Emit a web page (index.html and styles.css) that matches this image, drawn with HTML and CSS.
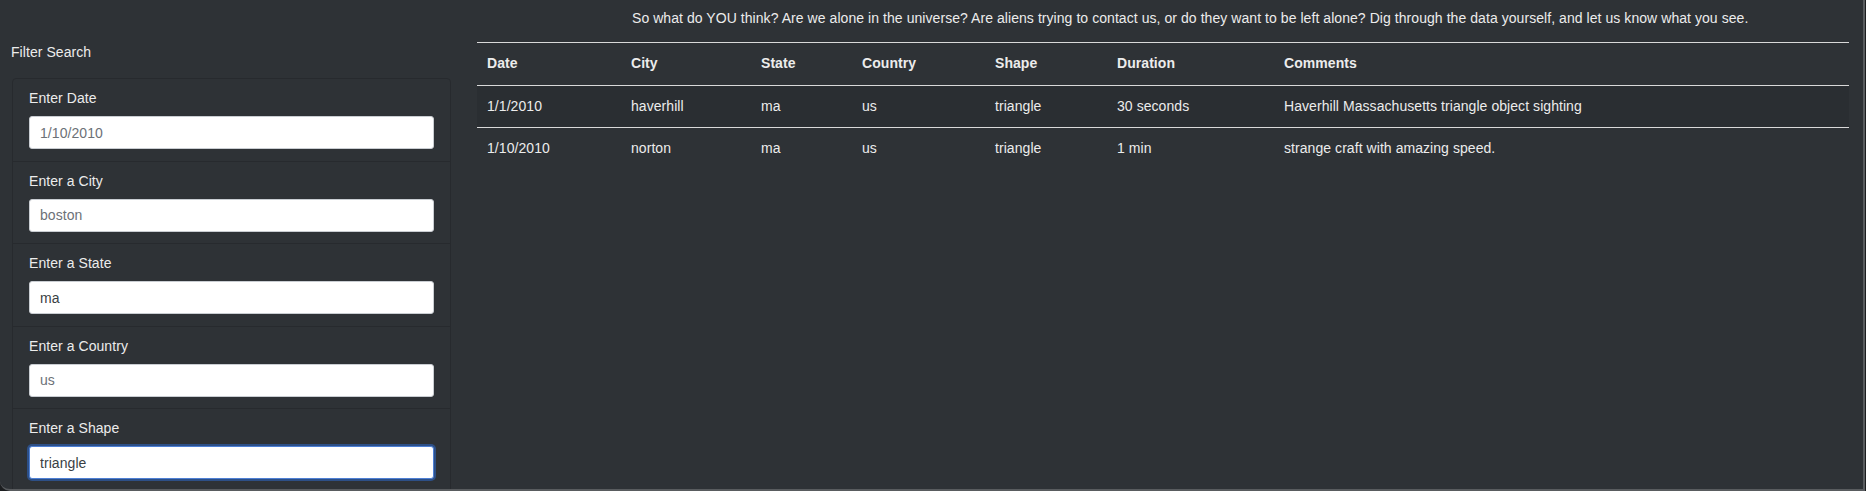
FILE: index.html
```html
<!DOCTYPE html>
<html lang="en">
<head>
<meta charset="utf-8">
<title>UFO Sightings</title>
<link rel="stylesheet" href="styles.css">
</head>
<body>
<div class="frame">
  <aside class="sidebar">
    <div class="filter-title">Filter Search</div>
    <ul class="filter-card">
      <li class="filter-item">
        <label class="filter-label" for="datetime">Enter Date</label>
        <input class="filter-input" id="datetime" type="text" placeholder="1/10/2010">
      </li>
      <li class="filter-item">
        <label class="filter-label" for="city">Enter a City</label>
        <input class="filter-input" id="city" type="text" placeholder="boston">
      </li>
      <li class="filter-item">
        <label class="filter-label" for="state">Enter a State</label>
        <input class="filter-input" id="state" type="text" value="ma">
      </li>
      <li class="filter-item">
        <label class="filter-label" for="country">Enter a Country</label>
        <input class="filter-input" id="country" type="text" placeholder="us">
      </li>
      <li class="filter-item">
        <label class="filter-label" for="shape">Enter a Shape</label>
        <input class="filter-input is-focused" id="shape" type="text" value="triangle">
      </li>
    </ul>
  </aside>
  <main class="main">
    <p class="intro">So what do YOU think? Are we alone in the universe? Are aliens trying to contact us, or do they want to be left alone? Dig through the data yourself, and let us know what you see.</p>
    <table class="ufo-table">
      <colgroup>
        <col class="c-date"><col class="c-city"><col class="c-state"><col class="c-country"><col class="c-shape"><col class="c-duration"><col class="c-comments">
      </colgroup>
      <thead>
        <tr><th>Date</th><th>City</th><th>State</th><th>Country</th><th>Shape</th><th>Duration</th><th>Comments</th></tr>
      </thead>
      <tbody>
        <tr class="striped"><td>1/1/2010</td><td>haverhill</td><td>ma</td><td>us</td><td>triangle</td><td>30 seconds</td><td>Haverhill Massachusetts triangle object sighting</td></tr>
        <tr><td>1/10/2010</td><td>norton</td><td>ma</td><td>us</td><td>triangle</td><td>1 min</td><td>strange craft with amazing speed.</td></tr>
      </tbody>
    </table>
  </main>
</div>
</body>
</html>
```
FILE: styles.css
```css
html {
  background: #1c1e20;
}
body {
  margin: 0;
  font-family: "Liberation Sans", Arial, Helvetica, sans-serif;
  font-size: 14px;
  letter-spacing: 0.06px;
  color: #ececec;
}
.frame {
  display: flex;
  box-sizing: border-box;
  width: 1865px;
  height: 491px;
  background: #2e3236;
  border-right: 2px solid #595c5f;
  border-bottom: 2px solid #595c5f;
  border-bottom-left-radius: 10px;
  overflow: hidden;
}
.sidebar {
  width: 439px;
  margin-left: 12px;
  padding-top: 42px;
  flex: none;
}
.filter-title {
  line-height: 20px;
  margin-left: -1px;
  margin-bottom: 16px;
  color: #ececec;
}
.filter-card {
  list-style: none;
  margin: 0;
  padding: 0;
  border: 1px solid #272a2e;
  border-radius: 4px;
}
.filter-item {
  display: flex;
  flex-direction: column;
  padding: 9px 16px 11.5px;
  border-bottom: 1px solid #272a2e;
}
.filter-label {
  line-height: 20px;
  margin-bottom: 8px;
  color: #ececec;
}
.filter-input {
  box-sizing: border-box;
  height: 33px;
  width: 100%;
  padding: 0 10px;
  font-family: inherit;
  font-size: 14px;
  letter-spacing: 0.06px;
  color: #3a3f44;
  background: #fff;
  border: 1px solid #c9cdd2;
  border-radius: 3px;
  outline: none;
}
.filter-input::placeholder {
  color: #6c7177;
}
.filter-input.is-focused {
  border-color: #4d7fd4;
  box-shadow: 0 0 0 2px #2d4f86;
}
.main {
  flex: none;
  width: 1372px;
  margin-left: 26px;
}
.intro {
  margin: 8px 0 14px 155px;
  line-height: 20px;
  color: #ececec;
}
.ufo-table {
  width: 100%;
  table-layout: fixed;
  border-collapse: collapse;
  border-top: 1px solid #d9d9d9;
}
.c-date { width: 144px; }
.c-city { width: 130px; }
.c-state { width: 101px; }
.c-country { width: 133px; }
.c-shape { width: 122px; }
.c-duration { width: 167px; }
.ufo-table th,
.ufo-table td {
  text-align: left;
  padding: 10px;
  line-height: 21px;
  color: #ececec;
  white-space: nowrap;
}
.ufo-table th {
  font-weight: bold;
  padding-top: 10px;
  padding-bottom: 11px;
}
.ufo-table thead tr,
.ufo-table tbody tr.striped {
  border-bottom: 1px solid #d9d9d9;
}
.ufo-table tr.striped {
  background: #2a2e32;
}
```
